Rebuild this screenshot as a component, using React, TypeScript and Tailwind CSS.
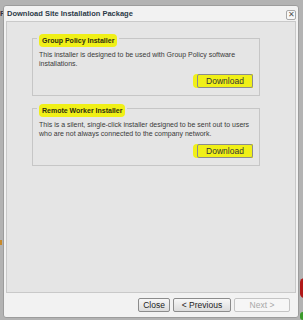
import React from 'react';

const font = { fontFamily: '"Liberation Sans", Arial, sans-serif' };

type Installer = {
  title: string;
  text: string[];
};

const installers: Installer[] = [
  {
    title: 'Group Policy Installer',
    text: ['This installer is designed to be used with Group Policy software', 'installations.'],
  },
  {
    title: 'Remote Worker Installer',
    text: [
      'This is a silent, single-click installer designed to be sent out to users',
      'who are not always connected to the company network.',
    ],
  },
];

function Btn({ label, disabled, w }: { label: string; disabled?: boolean; w: string }) {
  return (
    <button
      className={`${w} h-[14px] rounded-[2px] border text-[8.5px] leading-none ${
        disabled
          ? 'border-[#c4c4c4] bg-[#f6f6f6] text-[#a8a8a8]'
          : 'border-[#8c8c8c] bg-gradient-to-b from-[#f7f7f7] to-[#dcdcdc] text-[#222]'
      }`}
    >
      {label}
    </button>
  );
}

export default function App() {
  return (
    <div className="relative w-[303px] h-[320px] overflow-hidden bg-[#b3b3b3] pt-[5px] pl-[3px]" style={font}>
      {/* bits of the page behind the dialog */}
      <div className="absolute left-0 top-[8px] text-[8px] font-bold text-[#334]">P</div>
      <div className="absolute left-0 top-[240px] w-[2px] h-[5px] bg-[#c98a2a]" />
      <div className="absolute right-[-6px] top-[278px] w-[9px] h-[20px] rounded-full bg-[#b01818]" />
      <div className="absolute right-[-3px] top-[312px] w-[6px] h-[8px] rounded-full bg-[#3a9a2a]" />

      <div className="relative w-[296px] h-[313px] rounded-[3px] border border-[#9c9c9c] bg-[#f2f2f2] flex flex-col">
        <div className="h-[15px] flex items-center justify-between pl-[3px] pr-[2px]">
          <span className="text-[7.5px] font-bold text-[#2c3a48] leading-none mt-[1px]">
            Download Site Installation Package
          </span>
          <span className="w-[10px] h-[10px] mt-[3px] rounded-[2px] border border-[#a8a8a8] bg-[#f8f8f8] flex items-center justify-center text-[8px] leading-none text-[#555]">
            ✕
          </span>
        </div>

        <div className="mx-[2px] h-[272px] border border-[#c9c9c9] bg-[#e5e5e5] pt-[11px] pl-[25px]">
          {installers.map((inst, i) => (
            <fieldset
              key={inst.title}
              className={`w-[228px] border border-[#c6c6c6] px-[6px] pb-[7px] ${i > 0 ? 'mt-[7px]' : ''}`}
            >
              <legend className="ml-[-2px] px-[2px] h-[10px] leading-[10px]">
                <span className="rounded-[4px] bg-[#f0f017] px-[3px] py-[3px] text-[7px] font-bold text-[#2e2e10]">
                  {inst.title}
                </span>
              </legend>
              <div className="pt-[7px] text-[7px] leading-[9px] text-[#3a3a3a]">
                {inst.text.map((t) => (
                  <div key={t}>{t}</div>
                ))}
              </div>
              <div className="mt-[6px] flex justify-end">
                <span className="flex rounded-l-[4px] bg-[#f0f017] pl-[4px]">
                  <button className="w-[56px] h-[14px] rounded-[2px] border border-[#8c8c8c] bg-[#f0f017] text-[8.5px] leading-none text-[#333]">
                    Download
                  </button>
                </span>
              </div>
            </fieldset>
          ))}
        </div>

        <div className="flex justify-end gap-[3px] pr-[8px] pt-[5px]">
          <Btn label="Close" w="w-[32px]" />
          <Btn label="< Previous" w="w-[58px]" />
          <Btn label="Next >" w="w-[56px]" disabled />
        </div>
      </div>
    </div>
  );
}
